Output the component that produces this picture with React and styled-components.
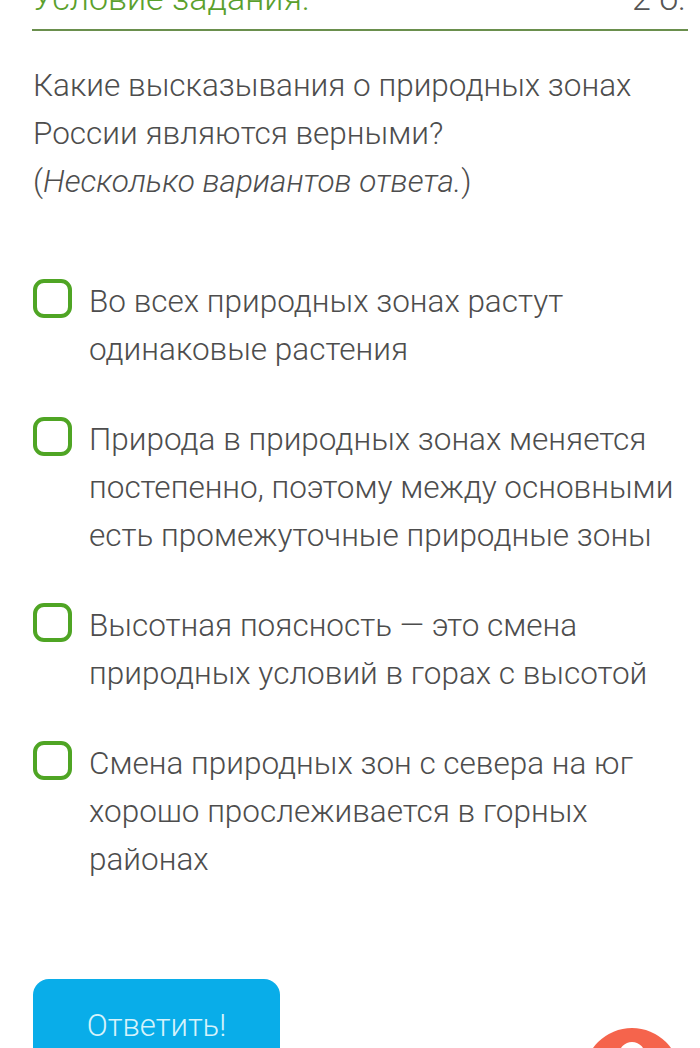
import React from "react";
import styled, { createGlobalStyle } from "styled-components";

const Global = createGlobalStyle`
  html, body { margin: 0; padding: 0; background: #ffffff; }
  body { font-family: Roboto, "Noto Sans", sans-serif; overflow: hidden; }
`;

const Page = styled.div`
  width: 700px;
  height: 1048px;
  overflow: hidden;
  position: relative;
  box-sizing: border-box;
  padding: 0 12px 0 33px;
`;

const Header = styled.div`
  display: flex;
  justify-content: space-between;
  align-items: baseline;
  margin-top: -22px;
  padding-bottom: 11px;
  border-bottom: 2px solid #6a8f4d;
  margin-left: -1px;
`;

const Title = styled.span`
  font-size: 34px;
  line-height: 40px;
  font-weight: 300;
  color: #5aa02c;
`;

const Points = styled.span`
  font-size: 34px;
  line-height: 40px;
  font-weight: 300;
  color: #555;
  margin-right: 2px;
`;

const Question = styled.p`
  margin: 31px 0 0;
  font-size: 31.5px;
  line-height: 48px;
  font-weight: 300;
  color: #4d4d4d;
`;

const Hint = styled.em`
  font-style: italic;
`;

const Options = styled.div`
  display: flex;
  flex-direction: column;
  gap: 42px;
  margin-top: 72px;
`;

const Option = styled.label`
  display: flex;
  align-items: flex-start;
  gap: 17px;
  cursor: pointer;
`;

const Box = styled.span`
  flex: none;
  width: 39px;
  height: 39px;
  margin-top: 1px;
  box-sizing: border-box;
  border: 4px solid #4fa524;
  border-radius: 11px;
`;

const OptionText = styled.span`
  font-size: 31.5px;
  line-height: 48px;
  font-weight: 300;
  color: #4d4d4d;
`;

const Submit = styled.button`
  display: block;
  margin-top: 95px;
  width: 247px;
  height: 92px;
  border: none;
  border-radius: 16px;
  background: #09ade9;
  color: #d6f3fb;
  font-family: Roboto, sans-serif;
  font-size: 31px;
  font-weight: 300;
  padding: 0;
`;

const Help = styled.div`
  position: absolute;
  left: 584px;
  top: 1028px;
  width: 96px;
  height: 96px;
  border-radius: 50%;
  background: #f5644c;
  display: flex;
  justify-content: center;
`;

const HelpMark = styled.span`
  margin-top: 14px;
  width: 26px;
  height: 26px;
  border-radius: 50%;
  border: 7px solid #ffffff;
  box-sizing: border-box;
`;

const options = [
  "Во всех природных зонах растут одинаковые растения",
  "Природа в природных зонах меняется постепенно, поэтому между основными есть промежуточные природные зоны",
  "Высотная поясность — это смена природных условий в горах с высотой",
  "Смена природных зон с севера на юг хорошо прослеживается в горных районах",
];

export default function App() {
  return (
    <>
      <Global />
      <Page>
        <Header>
          <Title>Условие задания:</Title>
          <Points>2 б.</Points>
        </Header>
        <Question>
          Какие высказывания о природных зонах России являются верными?
          <br />
          (<Hint>Несколько вариантов ответа.</Hint>)
        </Question>
        <Options>
          {options.map((t) => (
            <Option key={t}>
              <Box />
              <OptionText>{t}</OptionText>
            </Option>
          ))}
        </Options>
        <Submit>Ответить!</Submit>
        <Help>
          <HelpMark />
        </Help>
      </Page>
    </>
  );
}
